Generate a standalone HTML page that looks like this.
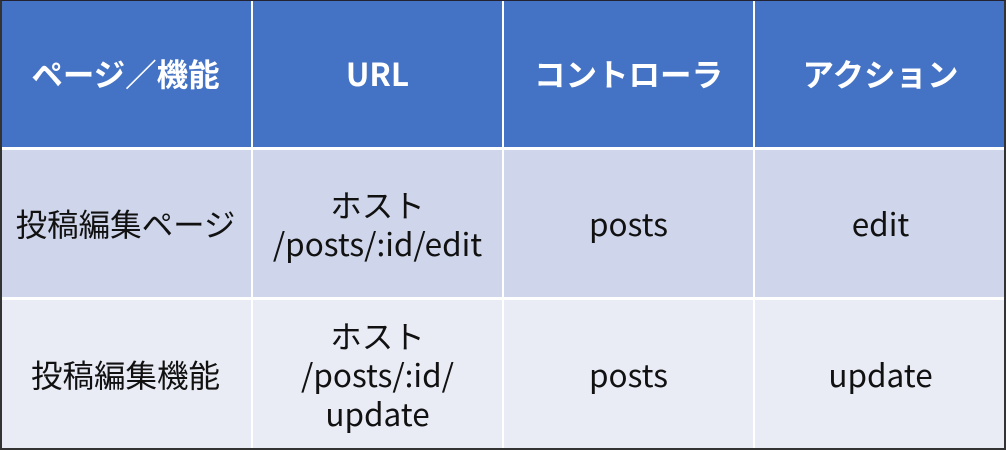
<!DOCTYPE html>
<html><head><meta charset="utf-8"><style>
html,body{margin:0;padding:0;background:#fff;}
body{width:1006px;height:450px;position:relative;overflow:hidden;font-family:"Noto Sans CJK JP","Liberation Sans",sans-serif;}
.frame{position:absolute;left:0;top:0;width:1006px;height:450px;box-sizing:border-box;border-left:2px solid #333;border-top:1px solid #223;border-right:2px solid #333;border-bottom:2px solid #333;}
.c{position:absolute;display:flex;align-items:center;justify-content:center;text-align:center;font-size:31.5px;line-height:39px;color:#111;}
.h{background:#4472C4;color:#fff;font-weight:bold;top:0;height:147px;}
.r1{background:#CFD5EA;top:150px;height:147px;}
.r2{background:#E9EBF5;top:300px;height:148px;}
</style></head><body>
<div class="c h" style="left:0;width:251px">ページ／機能</div>
<div class="c h" style="left:253px;width:249px">URL</div>
<div class="c h" style="left:504px;width:249px">コントローラ</div>
<div class="c h" style="left:755px;width:251px">アクション</div>
<div class="c r1" style="left:0;width:251px">投稿編集ページ</div>
<div class="c r1" style="left:253px;width:249px">ホスト<br>/posts/:id/edit</div>
<div class="c r1" style="left:504px;width:249px">posts</div>
<div class="c r1" style="left:755px;width:251px">edit</div>
<div class="c r2" style="left:0;width:251px">投稿編集機能</div>
<div class="c r2" style="left:253px;width:249px">ホスト<br>/posts/:id/<br>update</div>
<div class="c r2" style="left:504px;width:249px">posts</div>
<div class="c r2" style="left:755px;width:251px">update</div>
<div class="frame"></div>
</body></html>
